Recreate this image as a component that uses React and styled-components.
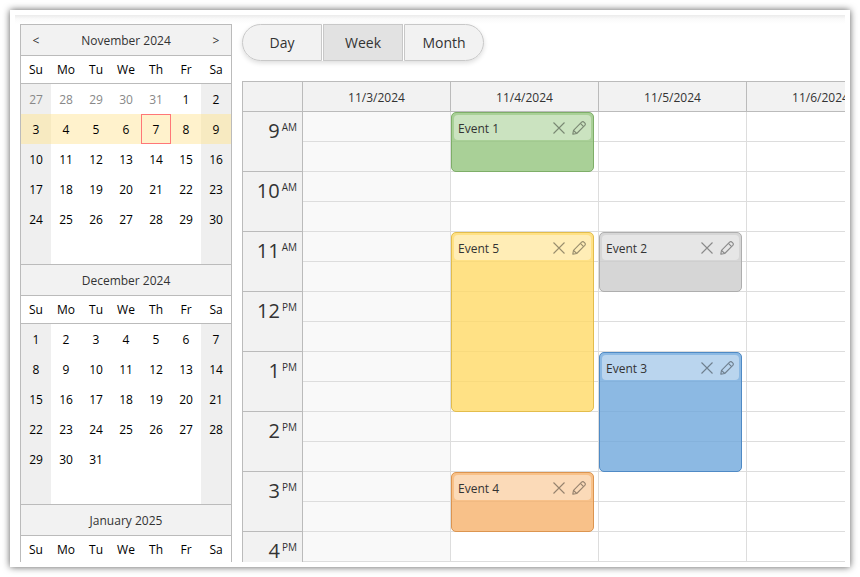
import { useState } from "react"
import styled, { createGlobalStyle } from "styled-components"

const GlobalStyle = createGlobalStyle`
	* {
		box-sizing: border-box;
	}

	body {
		margin: 0;
		background: #fff;
		color: #333;
		font-family: "Open Sans", "Noto Sans", sans-serif;
		font-size: 12px;
	}

	button {
		font-family: inherit;
		color: inherit;
		cursor: pointer;
	}
`

const Page = styled.div`
	height: 100vh;
	padding: 10px;
`

const Frame = styled.div`
	height: 100%;
	padding: 5px;
	background: #fff;
	box-shadow: 0 0 7px rgba(0, 0, 0, 0.65);
`

const Content = styled.main`
	display: flex;
	gap: 10px;
	height: 100%;
	padding: 9px 0 0 5px;
	overflow: hidden;
	background: linear-gradient(#ebebeb, #fafafa 4px, #fff 9px);
`

const Navigator = styled.aside`
	flex: none;
	width: 212px;
`

const MonthBox = styled.section`
	border: 1px solid #bbb;
	border-bottom: none;
	background: #fff;
`

const MonthTitle = styled.header`
	display: grid;
	grid-template-columns: 30px 1fr 30px;
	align-items: center;
	height: 31px;
	padding-top: 1px;
	border-bottom: 1px solid #bbb;
	background: #f2f2f2;
	text-align: center;
`

const MonthName = styled.span`
	grid-column: 2;
`

const ArrowButton = styled.button`
	height: 29px;
	padding: 0;
	border: none;
	background: none;
	font-size: 12px;
`

const DaysTable = styled.table`
	width: 100%;
	table-layout: fixed;
	border-collapse: separate;
	border-spacing: 0;
	color: #000;
	text-align: center;
`

const WeekdayCell = styled.th`
	height: 28px;
	padding: 0;
	border-bottom: 1px solid #bbb;
	font-weight: normal;
`

const getDayBackground = ({ $weekend, $selected }) => {
	if ($selected) return $weekend ? "#f7eac1" : "#fff2cc"
	return $weekend ? "#efefef" : "#fff"
}

const DayCell = styled.td`
	height: 30px;
	padding: 0;
	background: ${getDayBackground};
	border: ${({ $today }) => ($today ? "1px solid #f77" : "none")};
	color: ${({ $other }) => ($other ? "#888" : "#000")};
`

const Main = styled.div`
	flex: 1;
	min-width: 0;
`

const ViewSwitch = styled.div`
	display: inline-flex;
	gap: 1px;
	margin-bottom: 20px;
	border-radius: 19px;
	box-shadow: 0 2px 5px rgba(0, 0, 0, 0.14);
	vertical-align: top;
`

const ViewButton = styled.button`
	width: 80px;
	height: 37px;
	padding: 0;
	border: 1px solid #c8c8c8;
	background: ${({ $active }) => ($active ? "#e2e2e2" : "#f2f2f2")};
	font-size: 14px;

	&:first-child {
		border-radius: 19px 0 0 19px;
	}

	&:last-child {
		border-radius: 0 19px 19px 0;
	}
`

const Scheduler = styled.div`
	display: grid;
	grid-template-columns: 60px repeat(4, minmax(148px, 1fr));
	border-top: 1px solid #bbb;
	border-left: 1px solid #bbb;
`

const HeaderCell = styled.div`
	display: flex;
	align-items: center;
	justify-content: center;
	height: 30px;
	padding-top: 2px;
	border-right: 1px solid #bbb;
	border-bottom: 1px solid #bbb;
	background: #f2f2f2;
`

const HourCell = styled.div`
	display: flex;
	justify-content: flex-end;
	gap: 2px;
	height: 60px;
	padding: 4px 5px 0 0;
	border-right: 1px solid #bbb;
	border-bottom: 1px solid #bbb;
	background: #f2f2f2;
`

const HourNumber = styled.span`
	font-size: 20px;
	line-height: 30px;
`

const HourSuffix = styled.span`
	font-size: 10px;
	line-height: 22px;
`

const DayColumn = styled.div`
	display: grid;
	grid-template-columns: 1fr;
	grid-template-rows: repeat(16, 30px);
	border-right: 1px solid #ddd;
	background: ${({ $off }) => ($off ? "#f9f9f9" : "#fff")};
`

const Slot = styled.div`
	grid-area: ${({ $row }) => $row} / 1;
	border-bottom: 1px solid #ddd;
`

const EventCard = styled.article`
	grid-area: ${({ $start }) => $start} / 1 / span ${({ $span }) => $span};
	margin-right: 4px;
	padding: 2px;
	border: 1px solid ${({ $border }) => $border};
	border-radius: 5px;
	background: ${({ $back }) => $back};
`

const EventBar = styled.div`
	display: flex;
	align-items: center;
	gap: 6px;
	height: 25px;
	padding: 0 5px 0 4px;
	border-radius: 4px;
	background: rgba(255, 255, 255, 0.4);
`

const EventName = styled.span`
	flex: 1;
	padding-top: 2px;
`

const IconButton = styled.button`
	display: flex;
	padding: 0;
	border: none;
	background: none;
	opacity: 0.4;
`

const weekdays = ["Su", "Mo", "Tu", "We", "Th", "Fr", "Sa"]

const months = [
	{ name: "November 2024", lead: [27, 28, 29, 30, 31], days: 30, nav: true, selectedRow: 1, today: 7 },
	{ name: "December 2024", lead: [], days: 31 },
	{ name: "January 2025" },
]

const hours = [[9, "AM"], [10, "AM"], [11, "AM"], [12, "PM"], [1, "PM"], [2, "PM"], [3, "PM"], [4, "PM"]]

const colors = {
	green: { back: "rgba(147, 196, 125, 0.8)", border: "#7eae68" },
	yellow: { back: "rgba(255, 217, 102, 0.8)", border: "#e3bd4c" },
	gray: { back: "rgba(204, 204, 204, 0.8)", border: "#aeaeae" },
	blue: { back: "rgba(111, 168, 220, 0.8)", border: "#4f8ac5" },
	orange: { back: "rgba(246, 178, 107, 0.8)", border: "#dc9550" },
}

// start and span are counted in half hours, 1 is the slot at 9 AM
const days = [
	{ date: "11/3/2024", off: true, events: [] },
	{
		date: "11/4/2024",
		events: [
			{ name: "Event 1", start: 1, span: 2, color: "green" },
			{ name: "Event 5", start: 5, span: 6, color: "yellow" },
			{ name: "Event 4", start: 13, span: 2, color: "orange" },
		],
	},
	{
		date: "11/5/2024",
		events: [
			{ name: "Event 2", start: 5, span: 2, color: "gray" },
			{ name: "Event 3", start: 9, span: 4, color: "blue" },
		],
	},
	{ date: "11/6/2024", events: [] },
]

const getWeeks = ({ lead, days }) => {
	const cells = lead.map((day) => ({ day, other: true }))
	for (let day = 1; day <= days; day++) cells.push({ day })
	while (cells.length < 42) cells.push({})
	return [0, 1, 2, 3, 4, 5].map((row) => cells.slice(row * 7, row * 7 + 7))
}

const CloseIcon = () => (
	<svg width="14" height="14" viewBox="0 0 14 14" fill="none" stroke="#000" strokeWidth="1.1">
		<path d="M1.5 1.5L12.5 12.5M12.5 1.5L1.5 12.5" />
	</svg>
)

const PencilIcon = () => (
	<svg width="14" height="14" viewBox="0 0 14 14" fill="none" stroke="#000" strokeWidth="1.1" strokeLinejoin="round">
		<path d="M0.8 13.2L1.5 9.3L9.6 1.2Q10.9 0.1 12.2 1.3L12.7 1.8Q13.9 3.1 12.8 4.4L4.7 12.5Z" />
		<path d="M8.4 2.4L11.6 5.6M1.5 9.3L4.7 12.5" />
	</svg>
)

const Month = ({ month }) => (
	<MonthBox>
		<MonthTitle>
			{month.nav && <ArrowButton>&lt;</ArrowButton>}
			<MonthName>{month.name}</MonthName>
			{month.nav && <ArrowButton>&gt;</ArrowButton>}
		</MonthTitle>
		<DaysTable>
			<thead>
				<tr>
					{weekdays.map((day) => <WeekdayCell key={day}>{day}</WeekdayCell>)}
				</tr>
			</thead>
			{month.days && (
				<tbody>
					{getWeeks(month).map((week, row) => (
						<tr key={row}>
							{week.map(({ day, other }, i) => (
								<DayCell
									key={i}
									$weekend={i === 0 || i === 6}
									$selected={row === month.selectedRow}
									$today={!other && day && day === month.today}
									$other={other}
								>
									{day}
								</DayCell>
							))}
						</tr>
					))}
				</tbody>
			)}
		</DaysTable>
	</MonthBox>
)

const Event = ({ event }) => (
	<EventCard
		$start={event.start}
		$span={event.span}
		$back={colors[event.color].back}
		$border={colors[event.color].border}
	>
		<EventBar>
			<EventName>{event.name}</EventName>
			<IconButton aria-label="Delete"><CloseIcon /></IconButton>
			<IconButton aria-label="Edit"><PencilIcon /></IconButton>
		</EventBar>
	</EventCard>
)

const App = () => {
	const [view, setView] = useState("Week")

	return (
		<Page>
			<GlobalStyle />
			<Frame>
				<Content>
					<Navigator>
						{months.map((month) => <Month key={month.name} month={month} />)}
					</Navigator>
					<Main>
						<ViewSwitch>
							{["Day", "Week", "Month"].map((name) => (
								<ViewButton key={name} $active={view === name} onClick={() => setView(name)}>
									{name}
								</ViewButton>
							))}
						</ViewSwitch>
						<Scheduler>
							<HeaderCell />
							{days.map(({ date }) => <HeaderCell key={date}>{date}</HeaderCell>)}
							<div>
								{hours.map(([hour, suffix]) => (
									<HourCell key={hour}>
										<HourNumber>{hour}</HourNumber>
										<HourSuffix>{suffix}</HourSuffix>
									</HourCell>
								))}
							</div>
							{days.map(({ date, off, events }) => (
								<DayColumn key={date} $off={off}>
									{Array.from({ length: 16 }, (_, i) => <Slot key={i} $row={i + 1} />)}
									{events.map((event) => <Event key={event.name} event={event} />)}
								</DayColumn>
							))}
						</Scheduler>
					</Main>
				</Content>
			</Frame>
		</Page>
	)
}

export default App
